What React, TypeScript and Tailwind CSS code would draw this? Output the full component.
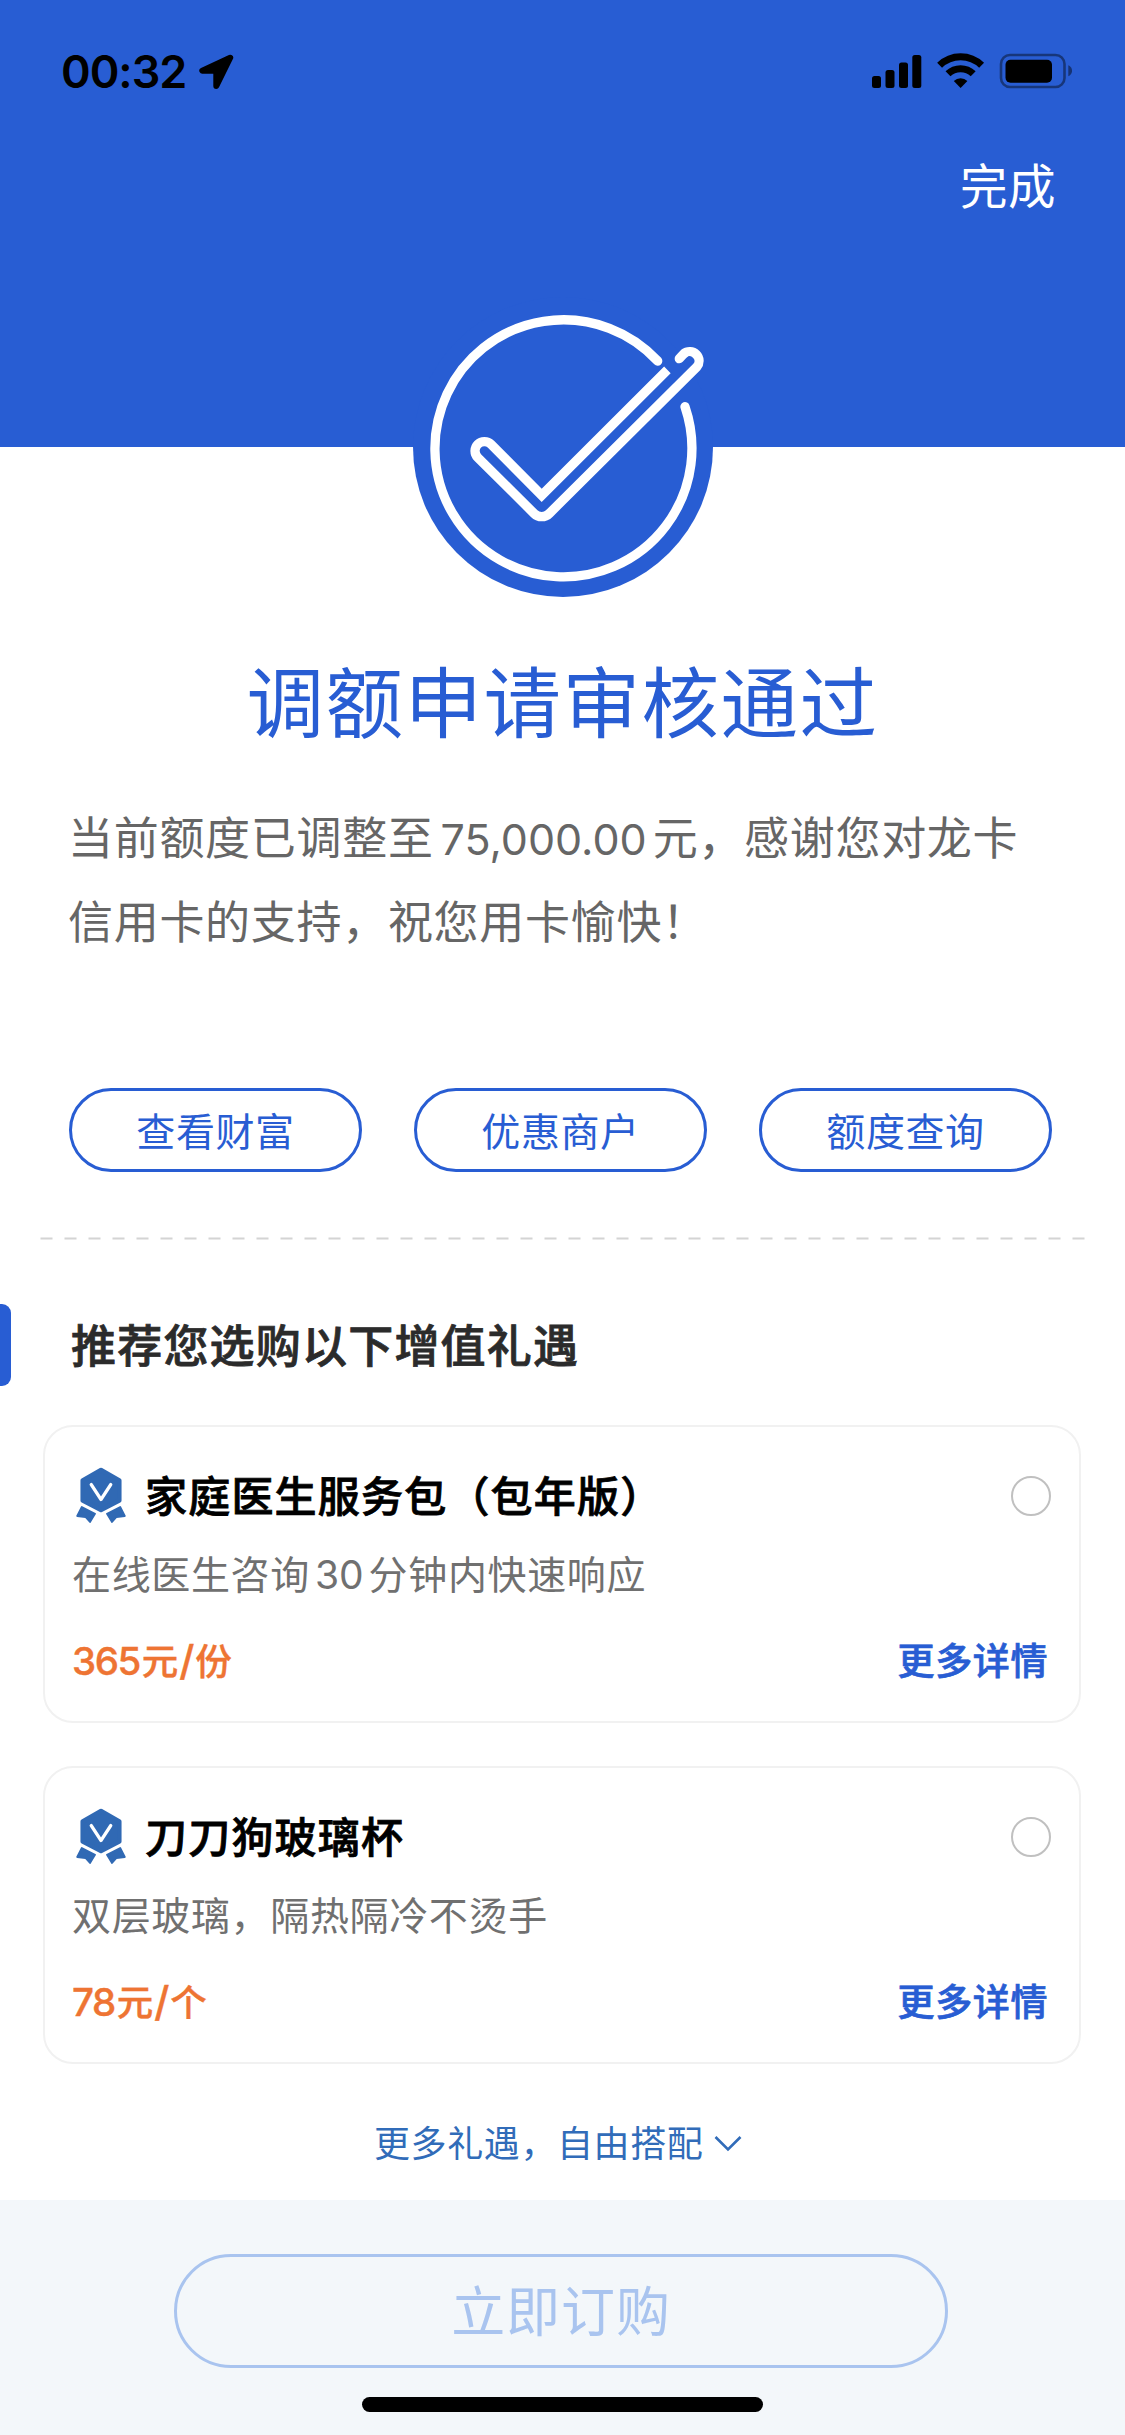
const shortcuts = ["查看财富", "优惠商户", "额度查询"];

const gifts = [
  {
    title: "家庭医生服务包（包年版）",
    desc: (
      <>
        在线医生咨询<span className="ml-[5px] mr-[5px] tracking-[0px]">30</span>分钟内快速响应
      </>
    ),
    amount: "365",
    unit: "份",
  },
  { title: "刀刀狗玻璃杯", desc: "双层玻璃，隔热隔冷不烫手", amount: "78", unit: "个" },
];

function StatusBar() {
  return (
    <div className="flex h-[143px] items-start justify-between pl-[61px] pr-[53px] text-black">
      <div className="flex items-center pt-[49px]">
        <span className="w-[126px] text-[45px] font-semibold leading-[46px] tracking-[-1px]">00:32</span>
        <svg className="ml-3 h-[36px] w-[36px]" viewBox="0 0 36 36" fill="currentColor" stroke="currentColor">
          <path d="M31.200 3.700 3.300 16.800H17.300V32Z" strokeWidth="6" strokeLinejoin="round" />
        </svg>
      </div>
      <svg className="mt-[52px] h-[38px] w-[201px]" viewBox="871 52 201 38">
        <rect x="872" y="76" width="9" height="12" rx="2.500" />
        <rect x="885.500" y="70" width="9" height="18" rx="2.500" />
        <rect x="899" y="62.500" width="9" height="25.500" rx="2.500" />
        <rect x="912.300" y="55" width="9" height="33" rx="2.500" />
        <g fill="none" stroke="#000" strokeWidth="7">
          <path d="M939.600 65.300a30 30 0 0 1 42 0" />
          <path d="M948 73.800a18 18 0 0 1 25.200 0" />
        </g>
        <path d="M960.600 88 953.800 81a10 10 0 0 1 13.600 0Z" />
        <rect x="1001" y="55" width="63.500" height="32" rx="9" fill="none" stroke="#000" strokeOpacity=".42" strokeWidth="2.600" />
        <rect x="1005.500" y="59.800" width="46.500" height="23" rx="5" />
        <path d="M1068.300 65.200c5 1.800 5 9.200 0 11Z" fillOpacity=".45" />
      </svg>
    </div>
  );
}

function SuccessMark() {
  return (
    <svg className="h-[300px] w-[300px]" viewBox="413 297 300 300">
      <circle cx="563" cy="447" r="150" fill="#285dd3" />
      <g fill="none" stroke="#fff" strokeWidth="9.300">
        <path d="M657.700 361A128.500 128.500 0 1 0 685 406.700" strokeLinecap="round" />
        <path
          d="M667.400 369.900 541.700 495.300 491 444.300A9.300 9.300 0 0 0 477.700 457.400L534.200 513.600A10.600 10.600 0 0 0 549.200 513.600L696.900 366.900A9.300 9.300 0 0 0 683.700 353.900"
          strokeMiterlimit="10"
        />
        <path d="M683.700 353.900 679.300 358.700" strokeLinecap="round" />
      </g>
    </svg>
  );
}

function Medal() {
  return (
    <svg className="h-[56px] w-[52px]" viewBox="0 0 52 56">
      <g fill="#3069b4" stroke="#3069b4" strokeLinejoin="round">
        <path d="M26 3 44.300 13.500V33.500L26 43 7.700 33.500V13.500Z" strokeWidth="4.500" />
        <path d="M6.800 40 2.200 49 10.500 50 15 55 20 46.800Z" strokeWidth="1.800" />
        <path d="M45.200 40 49.800 49 41.500 50 37 55 32 46.800Z" strokeWidth="1.800" />
      </g>
      <path d="M16.200 17.500 26 32.500 35.800 17.500" fill="none" stroke="#fff" strokeWidth="3.200" strokeLinecap="round" strokeLinejoin="round" />
    </svg>
  );
}

export default function App() {
  return (
    <div className="flex h-[2435px] w-[1125px] flex-col overflow-hidden bg-white font-['Inter','Noto_Sans_CJK_SC',sans-serif]">
      {/* Header */}
      <header className="h-[447px] shrink-0 bg-[#285dd3]">
        <StatusBar />
        <div className="flex justify-end pr-[69px]">
          <button className="h-[88px] text-[47.500px] leading-[88px] tracking-[0.500px] text-white">完成</button>
        </div>
      </header>

      {/* Result */}
      <section className="flex shrink-0 flex-col items-center">
        <div className="-mt-[150px]">
          <SuccessMark />
        </div>
        <h1 className="mt-[49px] h-[116px] text-[77.500px] leading-[116px] tracking-[1.500px] text-[#285dd3]">调额申请审核通过</h1>
        <div className="mt-[35px] w-full pl-[68px] text-[45px] leading-[84px] tracking-[0.700px] text-[#666]">
          <p>
            当前额度已调整至<span className="ml-[7px] mr-[6px] text-[43px] tracking-[0px]">75,000.00</span>元，感谢您对龙卡
          </p>
          <p>信用卡的支持，祝您用卡愉快！</p>
        </div>
      </section>

      {/* Shortcuts */}
      <div className="mt-[123px] flex shrink-0 gap-[52px] pl-[69px]">
        {shortcuts.map((label) => (
          <button
            key={label}
            className="h-[84px] w-[293px] rounded-full border-[3px] border-[#285dd3] pt-[3px] text-[39px] leading-[75px] tracking-[0.600px] text-[#285dd3]"
          >
            {label}
          </button>
        ))}
      </div>

      <svg className="ml-[40px] mt-[65px] h-[3px] w-[1045px] shrink-0" viewBox="0 0 1045 3">
        <path d="M.5 1.500H1045" stroke="#d4d4d4" strokeWidth="2" strokeDasharray="12 12" />
      </svg>

      {/* Gifts */}
      <div className="mt-[64px] flex h-[82px] shrink-0 items-center">
        <span className="h-[82px] w-[11px] rounded-r-[9px] bg-[#285dd3]" />
        <h2 className="ml-[60px] pt-[4px] text-[45px] font-medium tracking-[1.200px] text-[#2b2b2b] [-webkit-text-stroke:0.8px]">推荐您选购以下增值礼遇</h2>
      </div>

      <div className="mt-[39px] flex shrink-0 flex-col gap-[43px] pl-[43px]">
        {gifts.map((gift) => (
          <div key={gift.title} className="h-[298px] w-[1038px] rounded-[30px] border-2 border-[#f1f1f1] pl-[27px] pr-[28px] pt-[37px]">
            <div className="flex h-[64px] items-center">
              <span className="-mt-[2px] ml-[3px]">
                <Medal />
              </span>
              <h3 className="ml-[18px] flex-1 text-[42px] font-medium tracking-[1.200px] text-black [-webkit-text-stroke:0.8px]">{gift.title}</h3>
              <span className="h-[40px] w-[40px] rounded-full border-2 border-[#c0c0c0]" />
            </div>
            <p className="mt-[17px] h-[60px] text-[39px] leading-[60px] tracking-[0.650px] text-[#707070]">{gift.desc}</p>
            <div className="mt-[29px] flex h-[56px] items-center justify-between font-medium">
              <span className="text-[36.500px] text-[#ee7433] [-webkit-text-stroke:0.4px]">
                <span className="mr-[2px] tracking-[-1.500px]">
                  <span className="text-[38.500px]">{gift.amount}</span>
                </span>
                元<span className="mx-[1px] text-[41px] leading-none">/</span>
                {gift.unit}
              </span>
              <a className="mr-[3px] text-[37px] tracking-[0.600px] text-[#285dd3] [-webkit-text-stroke:0.7px]">更多详情</a>
            </div>
          </div>
        ))}
      </div>

      <div className="mt-[50px] flex h-[60px] shrink-0 items-center pl-[374px] text-[#316cb9]">
        <span className="text-[36px] tracking-[0.600px]">更多礼遇，自由搭配</span>
        <svg className="ml-[10px] h-[18px] w-[30px]" viewBox="0 0 30 18" fill="none" stroke="currentColor" strokeWidth="2.600">
          <path d="M2.500 2 15 14.500 27.500 2" />
        </svg>
      </div>

      {/* Footer */}
      <footer className="mt-auto flex h-[235px] shrink-0 flex-col items-center bg-[#f3f7fa]">
        <button className="mr-[3px] mt-[54px] h-[114px] w-[774px] rounded-full border-[3px] border-[#a9c4ef] pt-[3px] text-[54px] leading-[105px] tracking-[0.900px] text-[#a9c4ef]">
          立即订购
        </button>
        <div className="mt-[29px] h-[15px] w-[401px] rounded-full bg-black" />
      </footer>
    </div>
  );
}
